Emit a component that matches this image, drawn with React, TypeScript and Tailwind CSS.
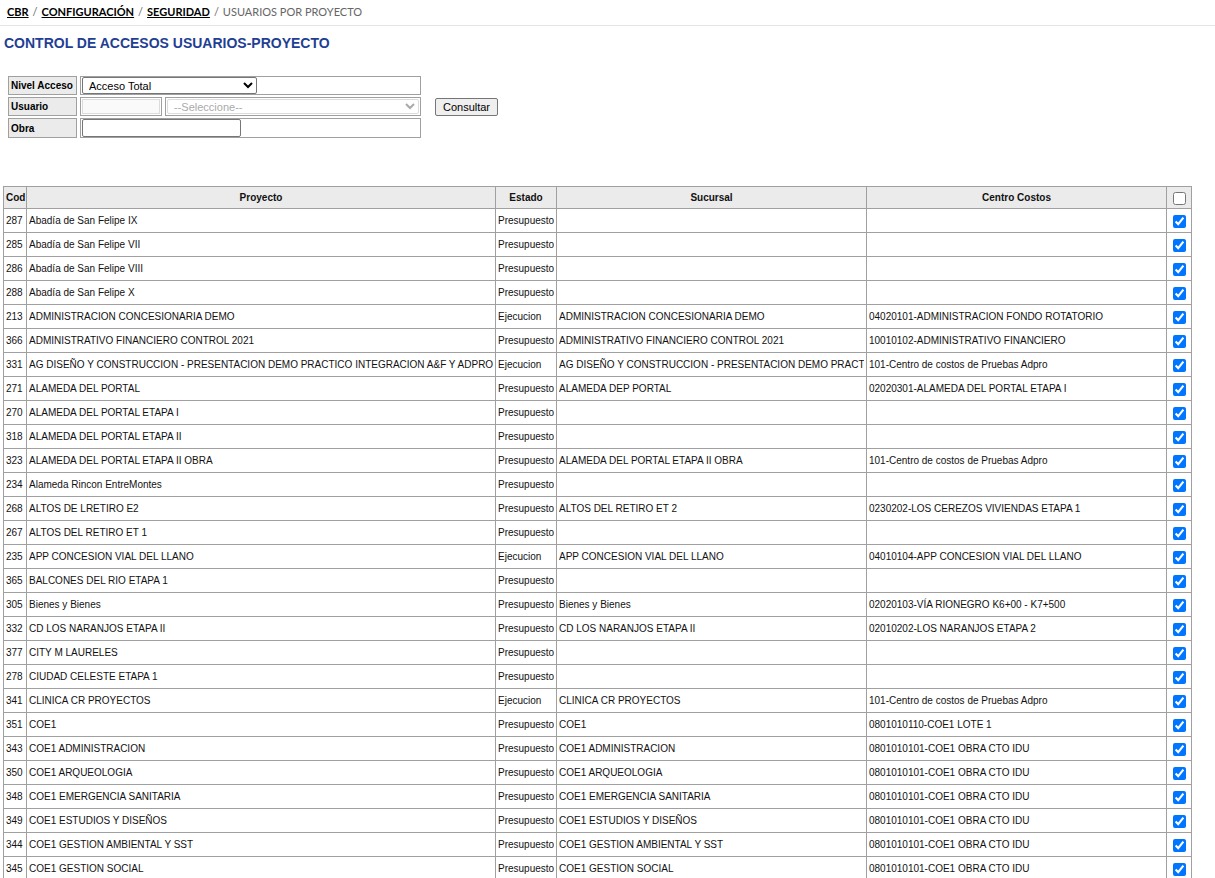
import React from "react";

type Row = [string, string, string, string, string];

const rows: Row[] = [
  ["287", "Abadía de San Felipe IX", "Presupuesto", "", ""],
  ["285", "Abadía de San Felipe VII", "Presupuesto", "", ""],
  ["286", "Abadía de San Felipe VIII", "Presupuesto", "", ""],
  ["288", "Abadía de San Felipe X", "Presupuesto", "", ""],
  ["213", "ADMINISTRACION CONCESIONARIA DEMO", "Ejecucion", "ADMINISTRACION CONCESIONARIA DEMO", "04020101-ADMINISTRACION FONDO ROTATORIO"],
  ["366", "ADMINISTRATIVO FINANCIERO CONTROL 2021", "Presupuesto", "ADMINISTRATIVO FINANCIERO CONTROL 2021", "10010102-ADMINISTRATIVO FINANCIERO"],
  ["331", "AG DISEÑO Y CONSTRUCCION - PRESENTACION DEMO PRACTICO INTEGRACION A&F Y ADPRO", "Ejecucion", "AG DISEÑO Y CONSTRUCCION - PRESENTACION DEMO PRACTICO INTEGRACION A&F Y ADPRO", "101-Centro de costos de Pruebas Adpro"],
  ["271", "ALAMEDA DEL PORTAL", "Presupuesto", "ALAMEDA DEP PORTAL", "02020301-ALAMEDA DEL PORTAL ETAPA I"],
  ["270", "ALAMEDA DEL PORTAL ETAPA I", "Presupuesto", "", ""],
  ["318", "ALAMEDA DEL PORTAL ETAPA II", "Presupuesto", "", ""],
  ["323", "ALAMEDA DEL PORTAL ETAPA II OBRA", "Presupuesto", "ALAMEDA DEL PORTAL ETAPA II OBRA", "101-Centro de costos de Pruebas Adpro"],
  ["234", "Alameda Rincon EntreMontes", "Presupuesto", "", ""],
  ["268", "ALTOS DE LRETIRO E2", "Presupuesto", "ALTOS DEL RETIRO ET 2", "0230202-LOS CEREZOS VIVIENDAS ETAPA 1"],
  ["267", "ALTOS DEL RETIRO ET 1", "Presupuesto", "", ""],
  ["235", "APP CONCESION VIAL DEL LLANO", "Ejecucion", "APP CONCESION VIAL DEL LLANO", "04010104-APP CONCESION VIAL DEL LLANO"],
  ["365", "BALCONES DEL RIO ETAPA 1", "Presupuesto", "", ""],
  ["305", "Bienes y Bienes", "Presupuesto", "Bienes y Bienes", "02020103-VÍA RIONEGRO K6+00 - K7+500"],
  ["332", "CD LOS NARANJOS ETAPA II", "Presupuesto", "CD LOS NARANJOS ETAPA II", "02010202-LOS NARANJOS ETAPA 2"],
  ["377", "CITY M LAURELES", "Presupuesto", "", ""],
  ["278", "CIUDAD CELESTE ETAPA 1", "Presupuesto", "", ""],
  ["341", "CLINICA CR PROYECTOS", "Ejecucion", "CLINICA CR PROYECTOS", "101-Centro de costos de Pruebas Adpro"],
  ["351", "COE1", "Presupuesto", "COE1", "0801010110-COE1 LOTE 1"],
  ["343", "COE1 ADMINISTRACION", "Presupuesto", "COE1 ADMINISTRACION", "0801010101-COE1 OBRA CTO IDU"],
  ["350", "COE1 ARQUEOLOGIA", "Presupuesto", "COE1 ARQUEOLOGIA", "0801010101-COE1 OBRA CTO IDU"],
  ["348", "COE1 EMERGENCIA SANITARIA", "Presupuesto", "COE1 EMERGENCIA SANITARIA", "0801010101-COE1 OBRA CTO IDU"],
  ["349", "COE1 ESTUDIOS Y DISEÑOS", "Presupuesto", "COE1 ESTUDIOS Y DISEÑOS", "0801010101-COE1 OBRA CTO IDU"],
  ["344", "COE1 GESTION AMBIENTAL Y SST", "Presupuesto", "COE1 GESTION AMBIENTAL Y SST", "0801010101-COE1 OBRA CTO IDU"],
  ["345", "COE1 GESTION SOCIAL", "Presupuesto", "COE1 GESTION SOCIAL", "0801010101-COE1 OBRA CTO IDU"],
];

const td = "border border-[#a0a0a0] h-[24px] px-[2px] align-middle";
const th =
  "border border-[#a0a0a0] h-[22px] px-[2px] whitespace-nowrap overflow-hidden align-middle font-bold bg-[#ebebeb] text-center";

function Cell({ children }: { children: React.ReactNode }) {
  return <div className="whitespace-nowrap overflow-hidden">{children}</div>;
}

export default function App() {
  return (
    <div className="bg-white min-h-screen text-black" style={{ fontFamily: "'Liberation Sans', Arial, sans-serif" }}>
      {/* Breadcrumb */}
      <div
        className="h-[26px] border-b border-[#e6e6e6] px-[7px] pt-[5px] text-[11px] leading-[14px] flex items-start gap-[4px] text-[#666]"
        style={{ fontFamily: "Lato, 'Open Sans', sans-serif" }}
      >
        <span className="font-bold text-black underline">CBR</span>
        <span>/</span>
        <span className="font-bold text-black underline">CONFIGURACIÓN</span>
        <span>/</span>
        <span className="font-bold text-black underline">SEGURIDAD</span>
        <span>/</span>
        <span className="text-[#666]">USUARIOS POR PROYECTO</span>
      </div>

      {/* Title */}
      <h1 className="px-[4px] pt-[9px] text-[14px] font-bold text-[#1f3f94] leading-[16px]">
        CONTROL DE ACCESOS USUARIOS-PROYECTO
      </h1>

      {/* Filter form */}
      <div className="flex items-center ml-[8px] mt-[25px] gap-[14px]">
        <div className="grid grid-cols-[69px_341px] gap-x-[3px] gap-y-[2px] text-[10px]">
          <div className="h-[19px] border border-[#a0a0a0] bg-[#ebebeb] font-bold flex items-center px-[2px]">Nivel Acceso</div>
          <div className="h-[19px] border border-[#a0a0a0] flex items-center px-[1px]">
            <select
              defaultValue="Acceso Total"
              className="w-[175px] h-[17px] border border-[#767676] rounded-[2px] text-[11px] bg-white text-black px-[2px]"
            >
              <option>Acceso Total</option>
            </select>
          </div>

          <div className="h-[19px] border border-[#a0a0a0] bg-[#ebebeb] font-bold flex items-center px-[2px]">Usuario</div>
          <div className="h-[19px] flex items-center gap-[3px]">
            <div className="h-[19px] w-[82px] border border-[#a0a0a0] p-[1px]">
              <input disabled className="w-full h-full border border-[#dcdcdc] bg-[#fafafa]" />
            </div>
            <div className="h-[19px] flex-1 border border-[#a0a0a0] p-[1px]">
              <select
                disabled
                className="w-full h-full border border-[#dcdcdc] rounded-[2px] text-[11px] bg-white text-[#aaa] px-[2px]"
              >
                <option>--Seleccione--</option>
              </select>
            </div>
          </div>

          <div className="h-[20px] border border-[#a0a0a0] bg-[#ebebeb] font-bold flex items-center px-[2px]">Obra</div>
          <div className="h-[20px] border border-[#a0a0a0] flex items-center px-[1px]">
            <input className="w-[159px] h-[18px] border border-[#767676] rounded-[2px] bg-white" />
          </div>
        </div>
        <button className="h-[18px] w-[63px] border border-[#767676] rounded-[2px] bg-[#efefef] text-[11px] leading-none">
          Consultar
        </button>
      </div>

      {/* Table */}
      <div className="ml-[3px] mt-[48px] w-[1188px]">
        <table className="table-fixed border-collapse w-[1188px] text-[10px] text-[#111]">
          <colgroup>
            <col className="w-[23px]" />
            <col className="w-[469px]" />
            <col className="w-[61px]" />
            <col className="w-[310px]" />
            <col className="w-[300px]" />
            <col className="w-[25px]" />
          </colgroup>
          <thead>
            <tr>
              <th className={th + " text-left"}>Cod</th>
              <th className={th}>Proyecto</th>
              <th className={th}>Estado</th>
              <th className={th}>Sucursal</th>
              <th className={th}>Centro Costos</th>
              <th className={th}>
                <input type="checkbox" className="align-middle m-0" readOnly />
              </th>
            </tr>
          </thead>
          <tbody>
            {rows.map((r) => (
              <tr key={r[0]}>
                <td className={td}><Cell>{r[0]}</Cell></td>
                <td className={td}><Cell>{r[1]}</Cell></td>
                <td className={td}><Cell>{r[2]}</Cell></td>
                <td className={td}><Cell>{r[3]}</Cell></td>
                <td className={td}><Cell>{r[4]}</Cell></td>
                <td className={td + " text-center"}>
                  <input type="checkbox" defaultChecked className="align-middle m-0" />
                </td>
              </tr>
            ))}
          </tbody>
        </table>
      </div>
    </div>
  );
}
